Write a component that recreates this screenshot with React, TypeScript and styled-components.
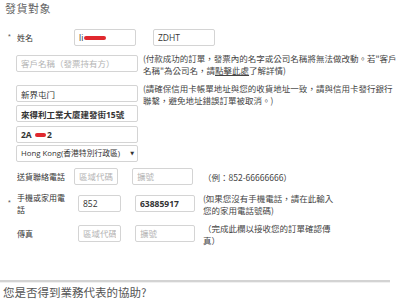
import React from "react";
import styled, { createGlobalStyle, css } from "styled-components";

const Global = createGlobalStyle`
  html, body { margin: 0; padding: 0; background: #fff; }
  body { font-family: "Open Sans", "Noto Sans CJK TC", sans-serif; color: #333; }
  * { box-sizing: border-box; }
`;

const Page = styled.div`
  width: 406px;
  height: 300px;
  overflow: hidden;
  padding-top: 2px;
`;

const Title = styled.h2`
  margin: 0;
  padding-left: 5px;
  font: 400 11px/13px "Noto Sans CJK TC", sans-serif;
  color: #666;
  letter-spacing: 0.5px;
`;

const Row = styled.div<{ $mt: number; $pl?: number; $gap?: number }>`
  display: flex;
  align-items: center;
  height: 17px;
  margin-top: ${(p) => p.$mt}px;
  padding-left: ${(p) => p.$pl ?? 0}px;
  gap: ${(p) => p.$gap ?? 0}px;
`;

const Label = styled.div<{ $w: number; $req?: boolean }>`
  display: flex;
  align-items: center;
  width: ${(p) => p.$w}px;
  flex: none;
  padding-left: 8px;
  font: 400 8px/12px "Noto Sans CJK TC", sans-serif;
  color: #333;
  &::before {
    content: "*";
    width: 9px;
    flex: none;
    font: 400 7px/7px "Liberation Sans", sans-serif;
    color: #555;
    margin-top: -2px;
    visibility: ${(p) => (p.$req ? "visible" : "hidden")};
  }
`;

const LabelText = styled.span`
  width: 52px;
  margin: -6px 0;
`;

const fieldCss = css`
  height: 17px;
  flex: none;
  border: 1px solid #d4d4d4;
  border-radius: 2px;
  background: #fff;
  padding: 0 4px;
  font: 400 8.5px/15px "Open Sans", "Noto Sans CJK TC", sans-serif;
  color: #333;
  outline: none;
`;

const Field = styled.input<{ $w: number; $bold?: boolean; $ml?: number }>`
  ${fieldCss}
  width: ${(p) => p.$w}px;
  margin-left: ${(p) => p.$ml ?? 0}px;
  font-weight: ${(p) => (p.$bold ? 700 : 400)};
  &::placeholder { color: #b4b4b4; }
`;

const FieldBox = styled.div<{ $w: number; $bold?: boolean }>`
  ${fieldCss}
  width: ${(p) => p.$w}px;
  display: flex;
  align-items: center;
  font-weight: ${(p) => (p.$bold ? 700 : 400)};
  white-space: nowrap;
`;

const Redact = styled.span<{ $w: number; $h: number }>`
  display: inline-block;
  width: ${(p) => p.$w}px;
  height: ${(p) => p.$h}px;
  background: #e0282e;
  border-radius: 2px;
  margin: 0 1px;
`;

const SelectBox = styled(FieldBox)`
  justify-content: space-between;
  padding-right: 3px;
  font-size: 7.8px;
`;

const Arrow = styled.span`
  font: 400 5px/5px "DejaVu Sans", sans-serif;
  color: #333;
`;

const Note = styled.div<{ $ml?: number }>`
  margin: -4px 0 -4px ${(p) => p.$ml ?? 0}px;
  font: 400 8.5px/12px "Noto Sans CJK TC", sans-serif;
  color: #444;
  white-space: nowrap;
`;

const Link = styled.a`
  color: #444;
  text-decoration: underline;
`;

const Divider = styled.hr`
  margin: 38px 0 0;
  width: 390px;
  height: 2px;
  border: none;
  background: #d3d3d3;
  box-shadow: 0 1px 0 #f0f0f0;
`;

const Question = styled.div`
  margin-top: 3px;
  padding-left: 3px;
  font: 400 11.5px/14px "Noto Sans CJK TC", sans-serif;
  color: #555;
`;

export default function App() {
  return (
    <>
      <Global />
      <Page>
        <Title>發貨對象</Title>

        <Row $mt={14}>
          <Label $w={74} $req>
            <LabelText>姓名</LabelText>
          </Label>
          <FieldBox $w={62}>
            li<Redact $w={22} $h={4} />
          </FieldBox>
          <Field $w={62} $ml={17} defaultValue="ZDHT" />
        </Row>

        <Row $mt={9} $pl={16} $gap={5}>
          <Field $w={122} placeholder="客戶名稱（發票持有方）" />
          <Note>
            (付款成功的訂單，發票內的名字或公司名稱將無法做改動。若"客戶
            <br />
            名稱"為公司名，請<Link>點擊此處</Link>了解詳情)
          </Note>
        </Row>

        <Row $mt={13} $pl={16} $gap={5}>
          <Field $w={122} defaultValue="新界屯门" />
          <Note>
            (請確保信用卡帳單地址與您的收貨地址一致，請與信用卡發行銀行
            <br />
            聯繫，避免地址錯誤訂單被取消。)
          </Note>
        </Row>

        <Row $mt={3} $pl={16}>
          <Field $w={122} $bold defaultValue="來得利工業大廈建發街15號" />
        </Row>

        <Row $mt={4} $pl={16}>
          <FieldBox $w={122} $bold>
            2A&nbsp;
            <Redact $w={11} $h={4} />2
          </FieldBox>
        </Row>

        <Row $mt={2} $pl={16}>
          <SelectBox $w={122}>
            <span>Hong Kong(香港特別行政區)</span>
            <Arrow>▼</Arrow>
          </SelectBox>
        </Row>

        <Row $mt={6}>
          <Label $w={74}>
            <LabelText>送貨聯絡電話</LabelText>
          </Label>
          <Field $w={44} placeholder="區域代碼" />
          <Field $w={61} $ml={14} placeholder="擴號" />
          <Note $ml={10}>（例：852-66666666）</Note>
        </Row>

        <Row $mt={10}>
          <Label $w={78} $req>
            <LabelText>手機或家用電話</LabelText>
          </Label>
          <Field $w={43} defaultValue="852" />
          <Field $w={60} $ml={14} $bold defaultValue="63885917" />
          <Note $ml={8}>
            (如果您沒有手機電話，請在此輸入
            <br />
            您的家用電話號碼)
          </Note>
        </Row>

        <Row $mt={13}>
          <Label $w={78}>
            <LabelText>傳真</LabelText>
          </Label>
          <Field $w={43} placeholder="區域代碼" />
          <Field $w={60} $ml={14} placeholder="擴號" />
          <Note $ml={8}>
            （完成此欄以接收您的訂單確認傳
            <br />
            真）
          </Note>
        </Row>

        <Divider />
        <Question>您是否得到業務代表的協助?</Question>
      </Page>
    </>
  );
}
